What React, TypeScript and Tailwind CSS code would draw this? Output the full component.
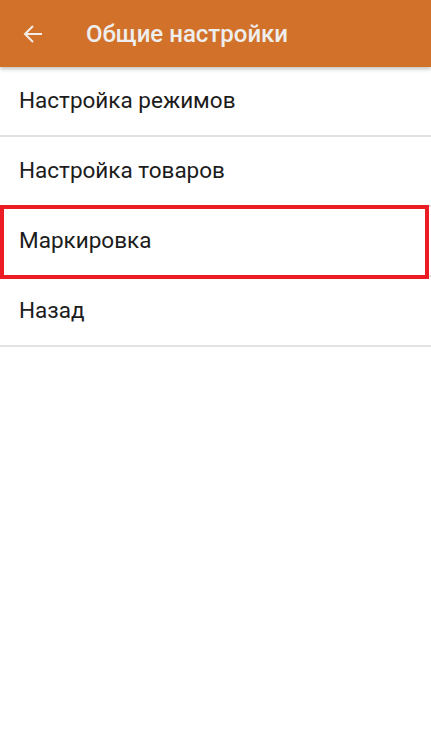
import React from "react";

const items = ["Настройка режимов", "Настройка товаров", "Маркировка", "Назад"];

export default function App() {
  return (
    <div className="w-[431px] h-[740px] bg-white overflow-hidden" style={{ fontFamily: "Roboto, 'Noto Sans', sans-serif" }}>
      <div className="relative z-10 h-[67px] bg-[#d2722a] flex items-center shadow-[0_2px_4px_rgba(0,0,0,0.25)]">
        <div className="w-[86px] flex items-center pl-[23px]">
          <svg width="20" height="20" viewBox="0 0 20 20" fill="none">
            <path d="M19 10H2.5M10 2L2 10l8 8" stroke="#f2ede8" strokeWidth="2" />
          </svg>
        </div>
        <span className="text-[24px] font-medium text-[#eeeeee] leading-none">Общие настройки</span>
      </div>
      <div className="flex flex-col">
        {items.map((t, i) => (
          <div key={t} className="relative h-[70px] border-b-2 border-[#e2e2e2] flex items-center pl-[19px]">
            <span className="text-[22.5px] text-[#1c1c1c]">{t}</span>
            {i === 2 && (
              <div className="absolute left-0 top-[-2px] w-[429px] h-[74px] border-[4px] border-[#ec1c24]" />
            )}
          </div>
        ))}
      </div>
    </div>
  );
}
